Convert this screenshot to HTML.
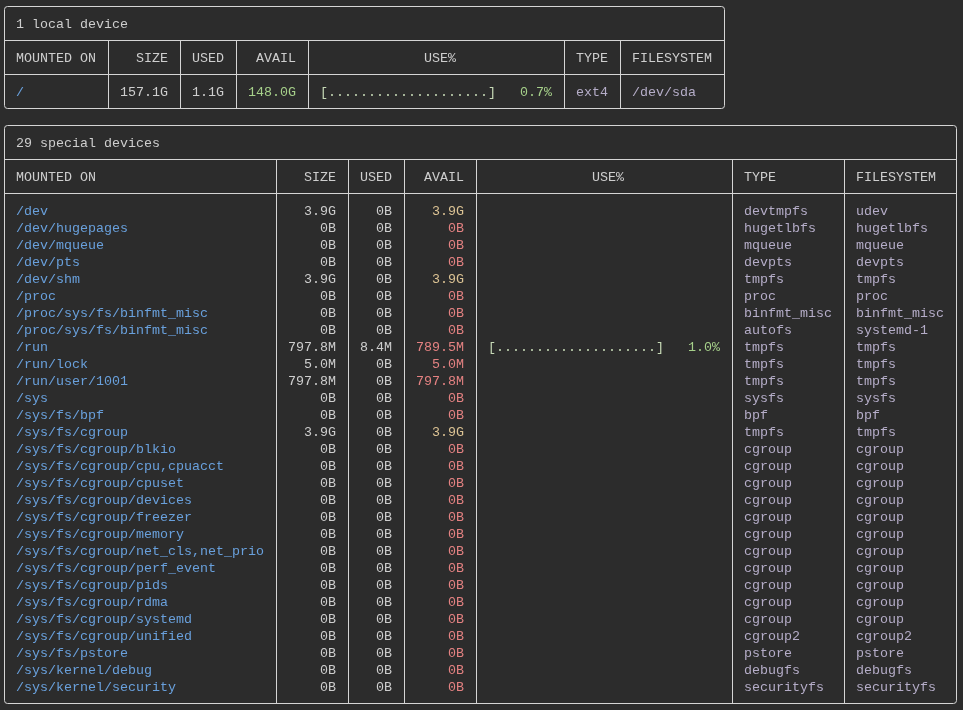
<!DOCTYPE html>
<html><head><meta charset="utf-8"><style>
html,body{margin:0;padding:0;background:#2c2c2c;}
body{width:963px;height:710px;position:relative;overflow:hidden;}
.t{position:absolute;white-space:pre;font-family:"Liberation Mono",monospace;font-size:13.333px;line-height:17px;height:17px;}
#tx{position:absolute;left:0;top:0;width:963px;height:710px;will-change:transform;}
.h{position:absolute;height:1px;background:#d5d5d5;}
.v{position:absolute;width:1px;background:#d5d5d5;}
.box{position:absolute;border:1px solid #d5d5d5;border-radius:3.5px;}
</style></head><body>
<div class="box" style="left:4px;top:6px;width:719px;height:101px"></div>
<div class="h" style="top:40px;left:4px;width:721px"></div>
<div class="h" style="top:74px;left:4px;width:721px"></div>
<div class="v" style="left:108px;top:40px;height:69px"></div>
<div class="v" style="left:180px;top:40px;height:69px"></div>
<div class="v" style="left:236px;top:40px;height:69px"></div>
<div class="v" style="left:308px;top:40px;height:69px"></div>
<div class="v" style="left:564px;top:40px;height:69px"></div>
<div class="v" style="left:620px;top:40px;height:69px"></div>
<div class="box" style="left:4px;top:125px;width:951px;height:577px"></div>
<div class="h" style="top:159px;left:4px;width:953px"></div>
<div class="h" style="top:193px;left:4px;width:953px"></div>
<div class="v" style="left:276px;top:159px;height:545px"></div>
<div class="v" style="left:348px;top:159px;height:545px"></div>
<div class="v" style="left:404px;top:159px;height:545px"></div>
<div class="v" style="left:476px;top:159px;height:545px"></div>
<div class="v" style="left:732px;top:159px;height:545px"></div>
<div class="v" style="left:844px;top:159px;height:545px"></div>
<div id="tx">
<div class="t" style="top:16px;left:16px;color:#cecece">1 local device</div>
<div class="t" style="top:50px;left:16px;color:#cecece">MOUNTED ON</div>
<div class="t" style="top:50px;left:136px;color:#cecece">SIZE</div>
<div class="t" style="top:50px;left:192px;color:#cecece">USED</div>
<div class="t" style="top:50px;left:256px;color:#cecece">AVAIL</div>
<div class="t" style="top:50px;left:424px;color:#cecece">USE%</div>
<div class="t" style="top:50px;left:576px;color:#cecece">TYPE</div>
<div class="t" style="top:50px;left:632px;color:#cecece">FILESYSTEM</div>
<div class="t" style="top:84px;left:16px;color:#69a0dc">/</div>
<div class="t" style="top:84px;left:120px;color:#cecece">157.1G</div>
<div class="t" style="top:84px;left:192px;color:#cecece">1.1G</div>
<div class="t" style="top:84px;left:248px;color:#a6d08a">148.0G</div>
<div class="t" style="top:84px;left:320px;color:#c6d9b6">[....................]</div>
<div class="t" style="top:84px;left:520px;color:#a6d08a">0.7%</div>
<div class="t" style="top:84px;left:576px;color:#b5adc8">ext4</div>
<div class="t" style="top:84px;left:632px;color:#b5adc8">/dev/sda</div>
<div class="t" style="top:135px;left:16px;color:#cecece">29 special devices</div>
<div class="t" style="top:169px;left:16px;color:#cecece">MOUNTED ON</div>
<div class="t" style="top:169px;left:304px;color:#cecece">SIZE</div>
<div class="t" style="top:169px;left:360px;color:#cecece">USED</div>
<div class="t" style="top:169px;left:424px;color:#cecece">AVAIL</div>
<div class="t" style="top:169px;left:592px;color:#cecece">USE%</div>
<div class="t" style="top:169px;left:744px;color:#cecece">TYPE</div>
<div class="t" style="top:169px;left:856px;color:#cecece">FILESYSTEM</div>
<div class="t" style="top:203px;left:16px;color:#69a0dc">/dev</div>
<div class="t" style="top:203px;left:304px;color:#cecece">3.9G</div>
<div class="t" style="top:203px;left:376px;color:#cecece">0B</div>
<div class="t" style="top:203px;left:432px;color:#dcc394">3.9G</div>
<div class="t" style="top:203px;left:744px;color:#b5adc8">devtmpfs</div>
<div class="t" style="top:203px;left:856px;color:#b5adc8">udev</div>
<div class="t" style="top:220px;left:16px;color:#69a0dc">/dev/hugepages</div>
<div class="t" style="top:220px;left:320px;color:#cecece">0B</div>
<div class="t" style="top:220px;left:376px;color:#cecece">0B</div>
<div class="t" style="top:220px;left:448px;color:#e48282">0B</div>
<div class="t" style="top:220px;left:744px;color:#b5adc8">hugetlbfs</div>
<div class="t" style="top:220px;left:856px;color:#b5adc8">hugetlbfs</div>
<div class="t" style="top:237px;left:16px;color:#69a0dc">/dev/mqueue</div>
<div class="t" style="top:237px;left:320px;color:#cecece">0B</div>
<div class="t" style="top:237px;left:376px;color:#cecece">0B</div>
<div class="t" style="top:237px;left:448px;color:#e48282">0B</div>
<div class="t" style="top:237px;left:744px;color:#b5adc8">mqueue</div>
<div class="t" style="top:237px;left:856px;color:#b5adc8">mqueue</div>
<div class="t" style="top:254px;left:16px;color:#69a0dc">/dev/pts</div>
<div class="t" style="top:254px;left:320px;color:#cecece">0B</div>
<div class="t" style="top:254px;left:376px;color:#cecece">0B</div>
<div class="t" style="top:254px;left:448px;color:#e48282">0B</div>
<div class="t" style="top:254px;left:744px;color:#b5adc8">devpts</div>
<div class="t" style="top:254px;left:856px;color:#b5adc8">devpts</div>
<div class="t" style="top:271px;left:16px;color:#69a0dc">/dev/shm</div>
<div class="t" style="top:271px;left:304px;color:#cecece">3.9G</div>
<div class="t" style="top:271px;left:376px;color:#cecece">0B</div>
<div class="t" style="top:271px;left:432px;color:#dcc394">3.9G</div>
<div class="t" style="top:271px;left:744px;color:#b5adc8">tmpfs</div>
<div class="t" style="top:271px;left:856px;color:#b5adc8">tmpfs</div>
<div class="t" style="top:288px;left:16px;color:#69a0dc">/proc</div>
<div class="t" style="top:288px;left:320px;color:#cecece">0B</div>
<div class="t" style="top:288px;left:376px;color:#cecece">0B</div>
<div class="t" style="top:288px;left:448px;color:#e48282">0B</div>
<div class="t" style="top:288px;left:744px;color:#b5adc8">proc</div>
<div class="t" style="top:288px;left:856px;color:#b5adc8">proc</div>
<div class="t" style="top:305px;left:16px;color:#69a0dc">/proc/sys/fs/binfmt_misc</div>
<div class="t" style="top:305px;left:320px;color:#cecece">0B</div>
<div class="t" style="top:305px;left:376px;color:#cecece">0B</div>
<div class="t" style="top:305px;left:448px;color:#e48282">0B</div>
<div class="t" style="top:305px;left:744px;color:#b5adc8">binfmt_misc</div>
<div class="t" style="top:305px;left:856px;color:#b5adc8">binfmt_misc</div>
<div class="t" style="top:322px;left:16px;color:#69a0dc">/proc/sys/fs/binfmt_misc</div>
<div class="t" style="top:322px;left:320px;color:#cecece">0B</div>
<div class="t" style="top:322px;left:376px;color:#cecece">0B</div>
<div class="t" style="top:322px;left:448px;color:#e48282">0B</div>
<div class="t" style="top:322px;left:744px;color:#b5adc8">autofs</div>
<div class="t" style="top:322px;left:856px;color:#b5adc8">systemd-1</div>
<div class="t" style="top:339px;left:16px;color:#69a0dc">/run</div>
<div class="t" style="top:339px;left:288px;color:#cecece">797.8M</div>
<div class="t" style="top:339px;left:360px;color:#cecece">8.4M</div>
<div class="t" style="top:339px;left:416px;color:#e48282">789.5M</div>
<div class="t" style="top:339px;left:488px;color:#c6d9b6">[....................]</div>
<div class="t" style="top:339px;left:688px;color:#a6d08a">1.0%</div>
<div class="t" style="top:339px;left:744px;color:#b5adc8">tmpfs</div>
<div class="t" style="top:339px;left:856px;color:#b5adc8">tmpfs</div>
<div class="t" style="top:356px;left:16px;color:#69a0dc">/run/lock</div>
<div class="t" style="top:356px;left:304px;color:#cecece">5.0M</div>
<div class="t" style="top:356px;left:376px;color:#cecece">0B</div>
<div class="t" style="top:356px;left:432px;color:#e48282">5.0M</div>
<div class="t" style="top:356px;left:744px;color:#b5adc8">tmpfs</div>
<div class="t" style="top:356px;left:856px;color:#b5adc8">tmpfs</div>
<div class="t" style="top:373px;left:16px;color:#69a0dc">/run/user/1001</div>
<div class="t" style="top:373px;left:288px;color:#cecece">797.8M</div>
<div class="t" style="top:373px;left:376px;color:#cecece">0B</div>
<div class="t" style="top:373px;left:416px;color:#e48282">797.8M</div>
<div class="t" style="top:373px;left:744px;color:#b5adc8">tmpfs</div>
<div class="t" style="top:373px;left:856px;color:#b5adc8">tmpfs</div>
<div class="t" style="top:390px;left:16px;color:#69a0dc">/sys</div>
<div class="t" style="top:390px;left:320px;color:#cecece">0B</div>
<div class="t" style="top:390px;left:376px;color:#cecece">0B</div>
<div class="t" style="top:390px;left:448px;color:#e48282">0B</div>
<div class="t" style="top:390px;left:744px;color:#b5adc8">sysfs</div>
<div class="t" style="top:390px;left:856px;color:#b5adc8">sysfs</div>
<div class="t" style="top:407px;left:16px;color:#69a0dc">/sys/fs/bpf</div>
<div class="t" style="top:407px;left:320px;color:#cecece">0B</div>
<div class="t" style="top:407px;left:376px;color:#cecece">0B</div>
<div class="t" style="top:407px;left:448px;color:#e48282">0B</div>
<div class="t" style="top:407px;left:744px;color:#b5adc8">bpf</div>
<div class="t" style="top:407px;left:856px;color:#b5adc8">bpf</div>
<div class="t" style="top:424px;left:16px;color:#69a0dc">/sys/fs/cgroup</div>
<div class="t" style="top:424px;left:304px;color:#cecece">3.9G</div>
<div class="t" style="top:424px;left:376px;color:#cecece">0B</div>
<div class="t" style="top:424px;left:432px;color:#dcc394">3.9G</div>
<div class="t" style="top:424px;left:744px;color:#b5adc8">tmpfs</div>
<div class="t" style="top:424px;left:856px;color:#b5adc8">tmpfs</div>
<div class="t" style="top:441px;left:16px;color:#69a0dc">/sys/fs/cgroup/blkio</div>
<div class="t" style="top:441px;left:320px;color:#cecece">0B</div>
<div class="t" style="top:441px;left:376px;color:#cecece">0B</div>
<div class="t" style="top:441px;left:448px;color:#e48282">0B</div>
<div class="t" style="top:441px;left:744px;color:#b5adc8">cgroup</div>
<div class="t" style="top:441px;left:856px;color:#b5adc8">cgroup</div>
<div class="t" style="top:458px;left:16px;color:#69a0dc">/sys/fs/cgroup/cpu,cpuacct</div>
<div class="t" style="top:458px;left:320px;color:#cecece">0B</div>
<div class="t" style="top:458px;left:376px;color:#cecece">0B</div>
<div class="t" style="top:458px;left:448px;color:#e48282">0B</div>
<div class="t" style="top:458px;left:744px;color:#b5adc8">cgroup</div>
<div class="t" style="top:458px;left:856px;color:#b5adc8">cgroup</div>
<div class="t" style="top:475px;left:16px;color:#69a0dc">/sys/fs/cgroup/cpuset</div>
<div class="t" style="top:475px;left:320px;color:#cecece">0B</div>
<div class="t" style="top:475px;left:376px;color:#cecece">0B</div>
<div class="t" style="top:475px;left:448px;color:#e48282">0B</div>
<div class="t" style="top:475px;left:744px;color:#b5adc8">cgroup</div>
<div class="t" style="top:475px;left:856px;color:#b5adc8">cgroup</div>
<div class="t" style="top:492px;left:16px;color:#69a0dc">/sys/fs/cgroup/devices</div>
<div class="t" style="top:492px;left:320px;color:#cecece">0B</div>
<div class="t" style="top:492px;left:376px;color:#cecece">0B</div>
<div class="t" style="top:492px;left:448px;color:#e48282">0B</div>
<div class="t" style="top:492px;left:744px;color:#b5adc8">cgroup</div>
<div class="t" style="top:492px;left:856px;color:#b5adc8">cgroup</div>
<div class="t" style="top:509px;left:16px;color:#69a0dc">/sys/fs/cgroup/freezer</div>
<div class="t" style="top:509px;left:320px;color:#cecece">0B</div>
<div class="t" style="top:509px;left:376px;color:#cecece">0B</div>
<div class="t" style="top:509px;left:448px;color:#e48282">0B</div>
<div class="t" style="top:509px;left:744px;color:#b5adc8">cgroup</div>
<div class="t" style="top:509px;left:856px;color:#b5adc8">cgroup</div>
<div class="t" style="top:526px;left:16px;color:#69a0dc">/sys/fs/cgroup/memory</div>
<div class="t" style="top:526px;left:320px;color:#cecece">0B</div>
<div class="t" style="top:526px;left:376px;color:#cecece">0B</div>
<div class="t" style="top:526px;left:448px;color:#e48282">0B</div>
<div class="t" style="top:526px;left:744px;color:#b5adc8">cgroup</div>
<div class="t" style="top:526px;left:856px;color:#b5adc8">cgroup</div>
<div class="t" style="top:543px;left:16px;color:#69a0dc">/sys/fs/cgroup/net_cls,net_prio</div>
<div class="t" style="top:543px;left:320px;color:#cecece">0B</div>
<div class="t" style="top:543px;left:376px;color:#cecece">0B</div>
<div class="t" style="top:543px;left:448px;color:#e48282">0B</div>
<div class="t" style="top:543px;left:744px;color:#b5adc8">cgroup</div>
<div class="t" style="top:543px;left:856px;color:#b5adc8">cgroup</div>
<div class="t" style="top:560px;left:16px;color:#69a0dc">/sys/fs/cgroup/perf_event</div>
<div class="t" style="top:560px;left:320px;color:#cecece">0B</div>
<div class="t" style="top:560px;left:376px;color:#cecece">0B</div>
<div class="t" style="top:560px;left:448px;color:#e48282">0B</div>
<div class="t" style="top:560px;left:744px;color:#b5adc8">cgroup</div>
<div class="t" style="top:560px;left:856px;color:#b5adc8">cgroup</div>
<div class="t" style="top:577px;left:16px;color:#69a0dc">/sys/fs/cgroup/pids</div>
<div class="t" style="top:577px;left:320px;color:#cecece">0B</div>
<div class="t" style="top:577px;left:376px;color:#cecece">0B</div>
<div class="t" style="top:577px;left:448px;color:#e48282">0B</div>
<div class="t" style="top:577px;left:744px;color:#b5adc8">cgroup</div>
<div class="t" style="top:577px;left:856px;color:#b5adc8">cgroup</div>
<div class="t" style="top:594px;left:16px;color:#69a0dc">/sys/fs/cgroup/rdma</div>
<div class="t" style="top:594px;left:320px;color:#cecece">0B</div>
<div class="t" style="top:594px;left:376px;color:#cecece">0B</div>
<div class="t" style="top:594px;left:448px;color:#e48282">0B</div>
<div class="t" style="top:594px;left:744px;color:#b5adc8">cgroup</div>
<div class="t" style="top:594px;left:856px;color:#b5adc8">cgroup</div>
<div class="t" style="top:611px;left:16px;color:#69a0dc">/sys/fs/cgroup/systemd</div>
<div class="t" style="top:611px;left:320px;color:#cecece">0B</div>
<div class="t" style="top:611px;left:376px;color:#cecece">0B</div>
<div class="t" style="top:611px;left:448px;color:#e48282">0B</div>
<div class="t" style="top:611px;left:744px;color:#b5adc8">cgroup</div>
<div class="t" style="top:611px;left:856px;color:#b5adc8">cgroup</div>
<div class="t" style="top:628px;left:16px;color:#69a0dc">/sys/fs/cgroup/unified</div>
<div class="t" style="top:628px;left:320px;color:#cecece">0B</div>
<div class="t" style="top:628px;left:376px;color:#cecece">0B</div>
<div class="t" style="top:628px;left:448px;color:#e48282">0B</div>
<div class="t" style="top:628px;left:744px;color:#b5adc8">cgroup2</div>
<div class="t" style="top:628px;left:856px;color:#b5adc8">cgroup2</div>
<div class="t" style="top:645px;left:16px;color:#69a0dc">/sys/fs/pstore</div>
<div class="t" style="top:645px;left:320px;color:#cecece">0B</div>
<div class="t" style="top:645px;left:376px;color:#cecece">0B</div>
<div class="t" style="top:645px;left:448px;color:#e48282">0B</div>
<div class="t" style="top:645px;left:744px;color:#b5adc8">pstore</div>
<div class="t" style="top:645px;left:856px;color:#b5adc8">pstore</div>
<div class="t" style="top:662px;left:16px;color:#69a0dc">/sys/kernel/debug</div>
<div class="t" style="top:662px;left:320px;color:#cecece">0B</div>
<div class="t" style="top:662px;left:376px;color:#cecece">0B</div>
<div class="t" style="top:662px;left:448px;color:#e48282">0B</div>
<div class="t" style="top:662px;left:744px;color:#b5adc8">debugfs</div>
<div class="t" style="top:662px;left:856px;color:#b5adc8">debugfs</div>
<div class="t" style="top:679px;left:16px;color:#69a0dc">/sys/kernel/security</div>
<div class="t" style="top:679px;left:320px;color:#cecece">0B</div>
<div class="t" style="top:679px;left:376px;color:#cecece">0B</div>
<div class="t" style="top:679px;left:448px;color:#e48282">0B</div>
<div class="t" style="top:679px;left:744px;color:#b5adc8">securityfs</div>
<div class="t" style="top:679px;left:856px;color:#b5adc8">securityfs</div>
</div>
</body></html>
